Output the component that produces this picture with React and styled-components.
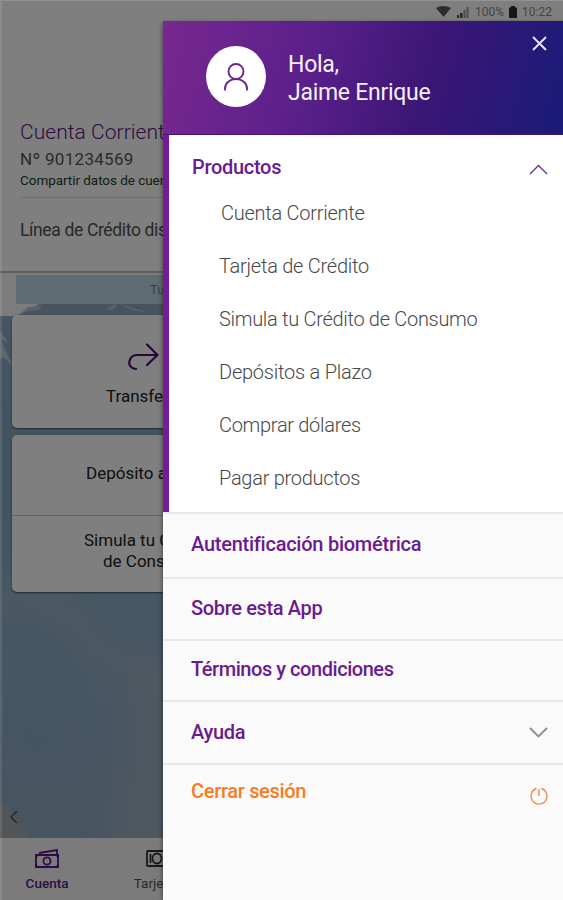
import React, { Component } from 'react'
import styled, { createGlobalStyle } from 'styled-components'

const products = [
    { name: 'Cuenta Corriente', spacing: -0.25 },
    { name: 'Tarjeta de Crédito', spacing: -0.25 },
    { name: 'Simula tu Crédito de Consumo', spacing: -0.3 },
    { name: 'Depósitos a Plazo', spacing: -0.23 },
    { name: 'Comprar dólares', spacing: -0.3 },
    { name: 'Pagar productos', spacing: -0.28 }
]

export default class App extends Component {
    render() {
        return (
            <Screen>
                <GlobalStyle />
                <AccountPage />
                <Scrim />
                <StatusBar />
                <Drawer />
            </Screen>
        )
    }
}

function AccountPage() {
    return (
        <Page>
            <Account>
                <AccountName>Cuenta Corriente</AccountName>
                <AccountNumber>Nº 901234569</AccountNumber>
                <ShareLink>Compartir datos de cuenta</ShareLink>
                <CreditLine>Línea de Crédito disponible</CreditLine>
            </Account>
            <Content>
                <Landscape />
                <Banner>Tu</Banner>
                <Card $height={113}>
                    <Action $height={113} $left={94} $top={27}>
                        <TransferIcon width="32" height="30" viewBox="0 0 32 30" fill="none" stroke="#4d0879" strokeWidth="2.200" strokeLinecap="round" strokeLinejoin="round">
                            <path d="M9 27C3.500 26.500 1.500 22.500 2.500 19C3.500 15 6 13 10 13H30M20 2.500L30.500 13L20 23" />
                        </TransferIcon>
                        Transferir
                    </Action>
                </Card>
                <Card $height={157}>
                    <Action $height={80} $left={74} $top={28}>Depósito a</Action>
                    <Action $height={77} $left={72} $top={14} $line>
                        Simula tu C
                        <SecondLine>de Cons</SecondLine>
                    </Action>
                </Card>
                <Back>
                    <svg width="10" height="14" viewBox="0 0 10 14" fill="none" stroke="#505050" strokeWidth="1.600">
                        <path d="M8 1L2 7L8 13" />
                    </svg>
                </Back>
            </Content>
            <TabBar>
                <Tab $active>
                    <svg width="26" height="19" viewBox="0 0 26 19" fill="none" stroke="#5d168b" strokeWidth="1.800">
                        <path d="M2 6H24V18H2ZM5 4L23 1V6" />
                        <circle cx="13" cy="12" r="3.600" />
                        <path d="M1 5H6L1 10ZM25 5H20L25 10ZM1 19V14L6 19ZM25 19V14L20 19Z" fill="#5d168b" stroke="none" />
                    </svg>
                    Cuenta
                </Tab>
                <Tab>
                    <svg width="26" height="19" viewBox="0 0 26 19" fill="none" stroke="#333" strokeWidth="1.800">
                        <rect x="2" y="2" width="28" height="15" rx="1" />
                        <ellipse cx="12" cy="9.500" rx="4.500" ry="5" />
                        <path d="M5.500 5V14" />
                    </svg>
                    Tarjetas
                </Tab>
            </TabBar>
        </Page>
    )
}

// Mountains and sky behind the cards
function Landscape() {
    return (
        <Scenery viewBox="0 0 170 566" preserveAspectRatio="none">
            <defs>
                <linearGradient id="sky" x1="0" y1="0" x2="0" y2="1">
                    <stop offset="0" stopColor="#8fadc8" />
                    <stop offset=".35" stopColor="#84a6c0" />
                    <stop offset=".58" stopColor="#8eb0c8" />
                    <stop offset="1" stopColor="#8faac2" />
                </linearGradient>
                <filter id="cloud" x="-50%" y="-50%" width="200%" height="200%">
                    <feGaussianBlur stdDeviation="13" />
                </filter>
            </defs>
            <rect width="170" height="566" fill="url(#sky)" />
            <path d="M0 0H170V29H43L16 43H0Z" fill="#f8f8f8" />
            <path d="M16 43L28 38L42 36L45 31H170V43Z" fill="#8ea8bc" />
            <path d="M20 41L28 34L42 33L38 37L28 38ZM106 36L115 31L117 33L112 37ZM122 32L147 39L132 37Z" fill="#b8c5cf" />
            <path d="M0 58L8 69L1 67L8 83L13 93L4 85L0 86Z" fill="#bccbd5" />
            <g filter="url(#cloud)">
                <path d="M0 322C40 312 75 326 94 356C112 385 132 390 170 393L170 410C120 408 97 397 82 370C65 340 28 337 0 335Z" fill="#b4b4bb" opacity=".5" />
                <path d="M5 350C60 330 63 392 78 420L55 500L5 478Z" fill="#80a2bc" opacity=".3" />
                <path d="M135 400L190 380V600H105Z" fill="#b0b4bf" opacity=".5" />
            </g>
            <path d="M0 532C9 532 19 545 27 566H0Z" fill="#a6adb3" />
            <path d="M25 542L32 549L44 562L34 554Z" fill="#a6b8c5" opacity=".5" />
        </Scenery>
    )
}

function StatusBar() {
    return (
        <Status>
            <svg width="15" height="11" viewBox="0 0 15 11"><path d="M0 2Q7.500 -2 15 2L7.500 11Z" fill="#2c2c2c" /></svg>
            <svg width="13" height="12" viewBox="0 0 13 12">
                <path d="M1 9H3V12H1ZM4 7H6.500V12H4Z" fill="#252525" />
                <path d="M7.500 4H9.500V12H7.500ZM10.500 1H12.500V12H10.500Z" fill="#4c4c4c" />
            </svg>
            <Percent>100%</Percent>
            <svg width="8" height="12" viewBox="0 0 8 12"><path d="M2 0H6V1.500H8V12H0V1.500H2Z" fill="#171717" /></svg>
            <span>10:22</span>
        </Status>
    )
}

function Drawer() {
    return (
        <Panel>
            <Header>
                <Avatar>
                    <svg width="26" height="30" viewBox="0 0 26 30" fill="none" stroke="#69258e" strokeWidth="1.900">
                        <circle cx="13" cy="9.500" r="7.500" />
                        <path d="M2 28.500V26.500C2 21 7 17 13 17S24 21 24 26.500V28.500" />
                    </svg>
                </Avatar>
                <Greeting>Hola,<br />Jaime Enrique</Greeting>
                <Close>
                    <svg width="15" height="15" viewBox="0 0 15 15" stroke="#eee9f6" strokeWidth="1.800" fill="none">
                        <path d="M1 1L14 14M14 1L1 14" />
                    </svg>
                </Close>
            </Header>
            <Products>
                <ProductsTitle>
                    <MenuText $spacing={-0.3}>Productos</MenuText>
                    <Chevron width="19" height="11" viewBox="0 0 19 11" fill="none" stroke="#6b3284" strokeWidth="1.400"><path d="M1 10L9.500 1.500L18 10" /></Chevron>
                </ProductsTitle>
                {products.map((product, index) => (
                    <Product key={product.name} $first={index === 0} $spacing={product.spacing}>{product.name}</Product>
                ))}
            </Products>
            <MenuRow $height={65} $lift={4}><MenuText $spacing={-0.25}>Autentificación biométrica</MenuText></MenuRow>
            <MenuRow $height={62} $lift={2}><MenuText $spacing={-0.35}>Sobre esta App</MenuText></MenuRow>
            <MenuRow $height={61} $lift={4}><MenuText $spacing={-0.45}>Términos y condiciones</MenuText></MenuRow>
            <MenuRow $height={63} $lift={1}>
                <MenuText $spacing={-0.3}>Ayuda</MenuText>
                <svg width="19" height="11" viewBox="0 0 19 11" fill="none" stroke="#8d8d8d" strokeWidth="1.800"><path d="M1 1L9.500 9.500L18 1" /></svg>
            </MenuRow>
            <MenuRow $height={57} $lift={4}>
                <MenuText $orange $spacing={-0.32}>Cerrar sesión</MenuText>
                <Power width="18" height="18" viewBox="0 0 18 18" fill="none" stroke="#f58a50" strokeWidth="1.400">
                    <path d="M6.500 1.500A8 8 0 1 0 11.500 1.500M9 2V9" />
                </Power>
            </MenuRow>
        </Panel>
    )
}

const GlobalStyle = createGlobalStyle`
  * { box-sizing: border-box; }
  body { margin: 0; overflow: hidden; }
  svg { display: block; flex-shrink: 0; }
`;

const Screen = styled.div`
  position: relative;
  width: 563px;
  height: 900px;
  overflow: hidden;
  background: #fff;
  font-family: Roboto, "Liberation Sans", sans-serif;
`;

const Page = styled.div`
  display: flex;
  flex-direction: column;
  height: 900px;
`;

const Account = styled.div`
  height: 273px;
  padding: 119px 0 0 20px;
  white-space: nowrap;
  border-bottom: 2px solid #bcbcbc;
`;

const AccountName = styled.div`
  font-size: 21px;
  font-weight: 300;
  line-height: 27px;
  letter-spacing: 0.050px;
  color: #5a1683;
`;

const AccountNumber = styled.div`
  font-size: 17px;
  line-height: 26px;
  letter-spacing: 0.300px;
  color: #555;
`;

const ShareLink = styled.div`
  height: 26px;
  font-size: 13.500px;
  line-height: 16px;
  letter-spacing: -0.050px;
  border-bottom: 1px solid #e0e0e0;
  color: #193f1d;
`;

const CreditLine = styled.div`
  padding-top: 20px;
  font-size: 17.500px;
  line-height: 24px;
  letter-spacing: -0.350px;
  color: #505050;
`;

const Content = styled.div`
  position: relative;
  height: 565px;
  padding-left: 12px;
`;

const Scenery = styled.svg`
  position: absolute;
  left: 0;
  top: 0;
  width: 170px;
  height: 565px;
`;

const Banner = styled.div`
  position: relative;
  height: 29px;
  margin: 2px 0 11px 4px;
  padding-left: 134px;
  background: #bbdbe6;
  font-size: 13px;
  line-height: 30px;
  color: #6b7b84;
`;

const Card = styled.div`
  position: relative;
  height: ${props => props.$height}px;
  width: 240px;
  margin-bottom: 7px;
  border-radius: 5px;
  background: #fff;
  box-shadow: 0 1px 2px #345064;
`;

const Action = styled.div`
  height: ${props => props.$height}px;
  padding: ${props => props.$top}px 0 0 ${props => props.$left}px;
  border-top: ${props => props.$line ? '1px solid #c8c8c8' : 'none'};
  font-size: 17px;
  line-height: 21px;
  white-space: nowrap;
  color: #202020;
`;

const TransferIcon = styled.svg`
  margin: 0 0 14px 21px;
`;

const SecondLine = styled.div`
  padding-left: 19px;
`;

const Back = styled.div`
  position: absolute;
  left: 9px;
  bottom: 14px;
`;

const TabBar = styled.div`
  display: flex;
  height: 62px;
  background: #f6f6f6;
`;

const Tab = styled.div`
  display: flex;
  flex-direction: column;
  align-items: center;
  gap: 7px;
  width: ${props => props.$active ? 94 : 128}px;
  padding-top: 11px;
  font-size: 13.500px;
  font-weight: ${props => props.$active ? 500 : 400};
  color: ${props => props.$active ? '#5d168b' : '#555'};
`;

const Scrim = styled.div`
  position: absolute;
  inset: 0;
  border-left: 2px solid rgba(255, 255, 255, 0.100);
  border-top: 1px solid rgba(255, 255, 255, 0.150);
  background: rgba(0, 0, 0, 0.500);
`;

const Status = styled.div`
  position: absolute;
  top: 2px;
  right: 11px;
  height: 19px;
  display: flex;
  align-items: center;
  gap: 5px;
  font-size: 12px;
  color: #444;
`;

const Percent = styled.span`
  margin-left: 1px;
`;

const Panel = styled.div`
  position: absolute;
  left: 163px;
  top: 21px;
  width: 400px;
  height: 879px;
  background: #fafafa;
  box-shadow: 0 2px 5px rgba(0, 0, 0, 0.550);
`;

const Header = styled.div`
  position: relative;
  display: flex;
  height: 114px;
  padding: 25px 0 0 43px;
  background: linear-gradient(105deg, #792791 0%, #5b208a 36%, #3b1676 66%, #191b78 100%);
  border-bottom: 1px solid #40147a;
`;

const Avatar = styled.div`
  display: flex;
  align-items: center;
  justify-content: center;
  width: 60px;
  height: 61px;
  border-radius: 50%;
  background: #fff;
`;

const Greeting = styled.div`
  margin: 5px 0 0 22px;
  font-size: 23px;
  line-height: 28px;
  letter-spacing: -0.280px;
  color: #f7f0fa;
`;

const Close = styled.div`
  position: absolute;
  right: 16px;
  top: 15px;
`;

const Products = styled.div`
  height: 377px;
  border-left: 6px solid #76199a;
  background: #fff;
`;

const ProductsTitle = styled.div`
  display: flex;
  align-items: center;
  justify-content: space-between;
  height: 52px;
  padding: 12px 15px 0 23px;
`;

const Chevron = styled.svg`
  margin-top: 4px;
`;

const Product = styled.div`
  height: 53px;
  padding-left: ${props => props.$first ? 52 : 50}px;
  font-size: 20px;
  font-weight: 300;
  line-height: 53px;
  letter-spacing: ${props => props.$spacing}px;
  white-space: nowrap;
  color: #484848;
`;

const MenuRow = styled.div`
  display: flex;
  align-items: center;
  justify-content: space-between;
  height: ${props => props.$height}px;
  padding: 0 15px ${props => props.$lift}px 28px;
  border-top: 2px solid #e9e9e9;
`;

const MenuText = styled.span`
  font-size: 20px;
  font-weight: 500;
  letter-spacing: ${props => props.$spacing}px;
  color: ${props => props.$orange ? '#fb7a22' : '#6b1a90'};
`;

const Power = styled.svg`
  margin-top: 11px;
`;
